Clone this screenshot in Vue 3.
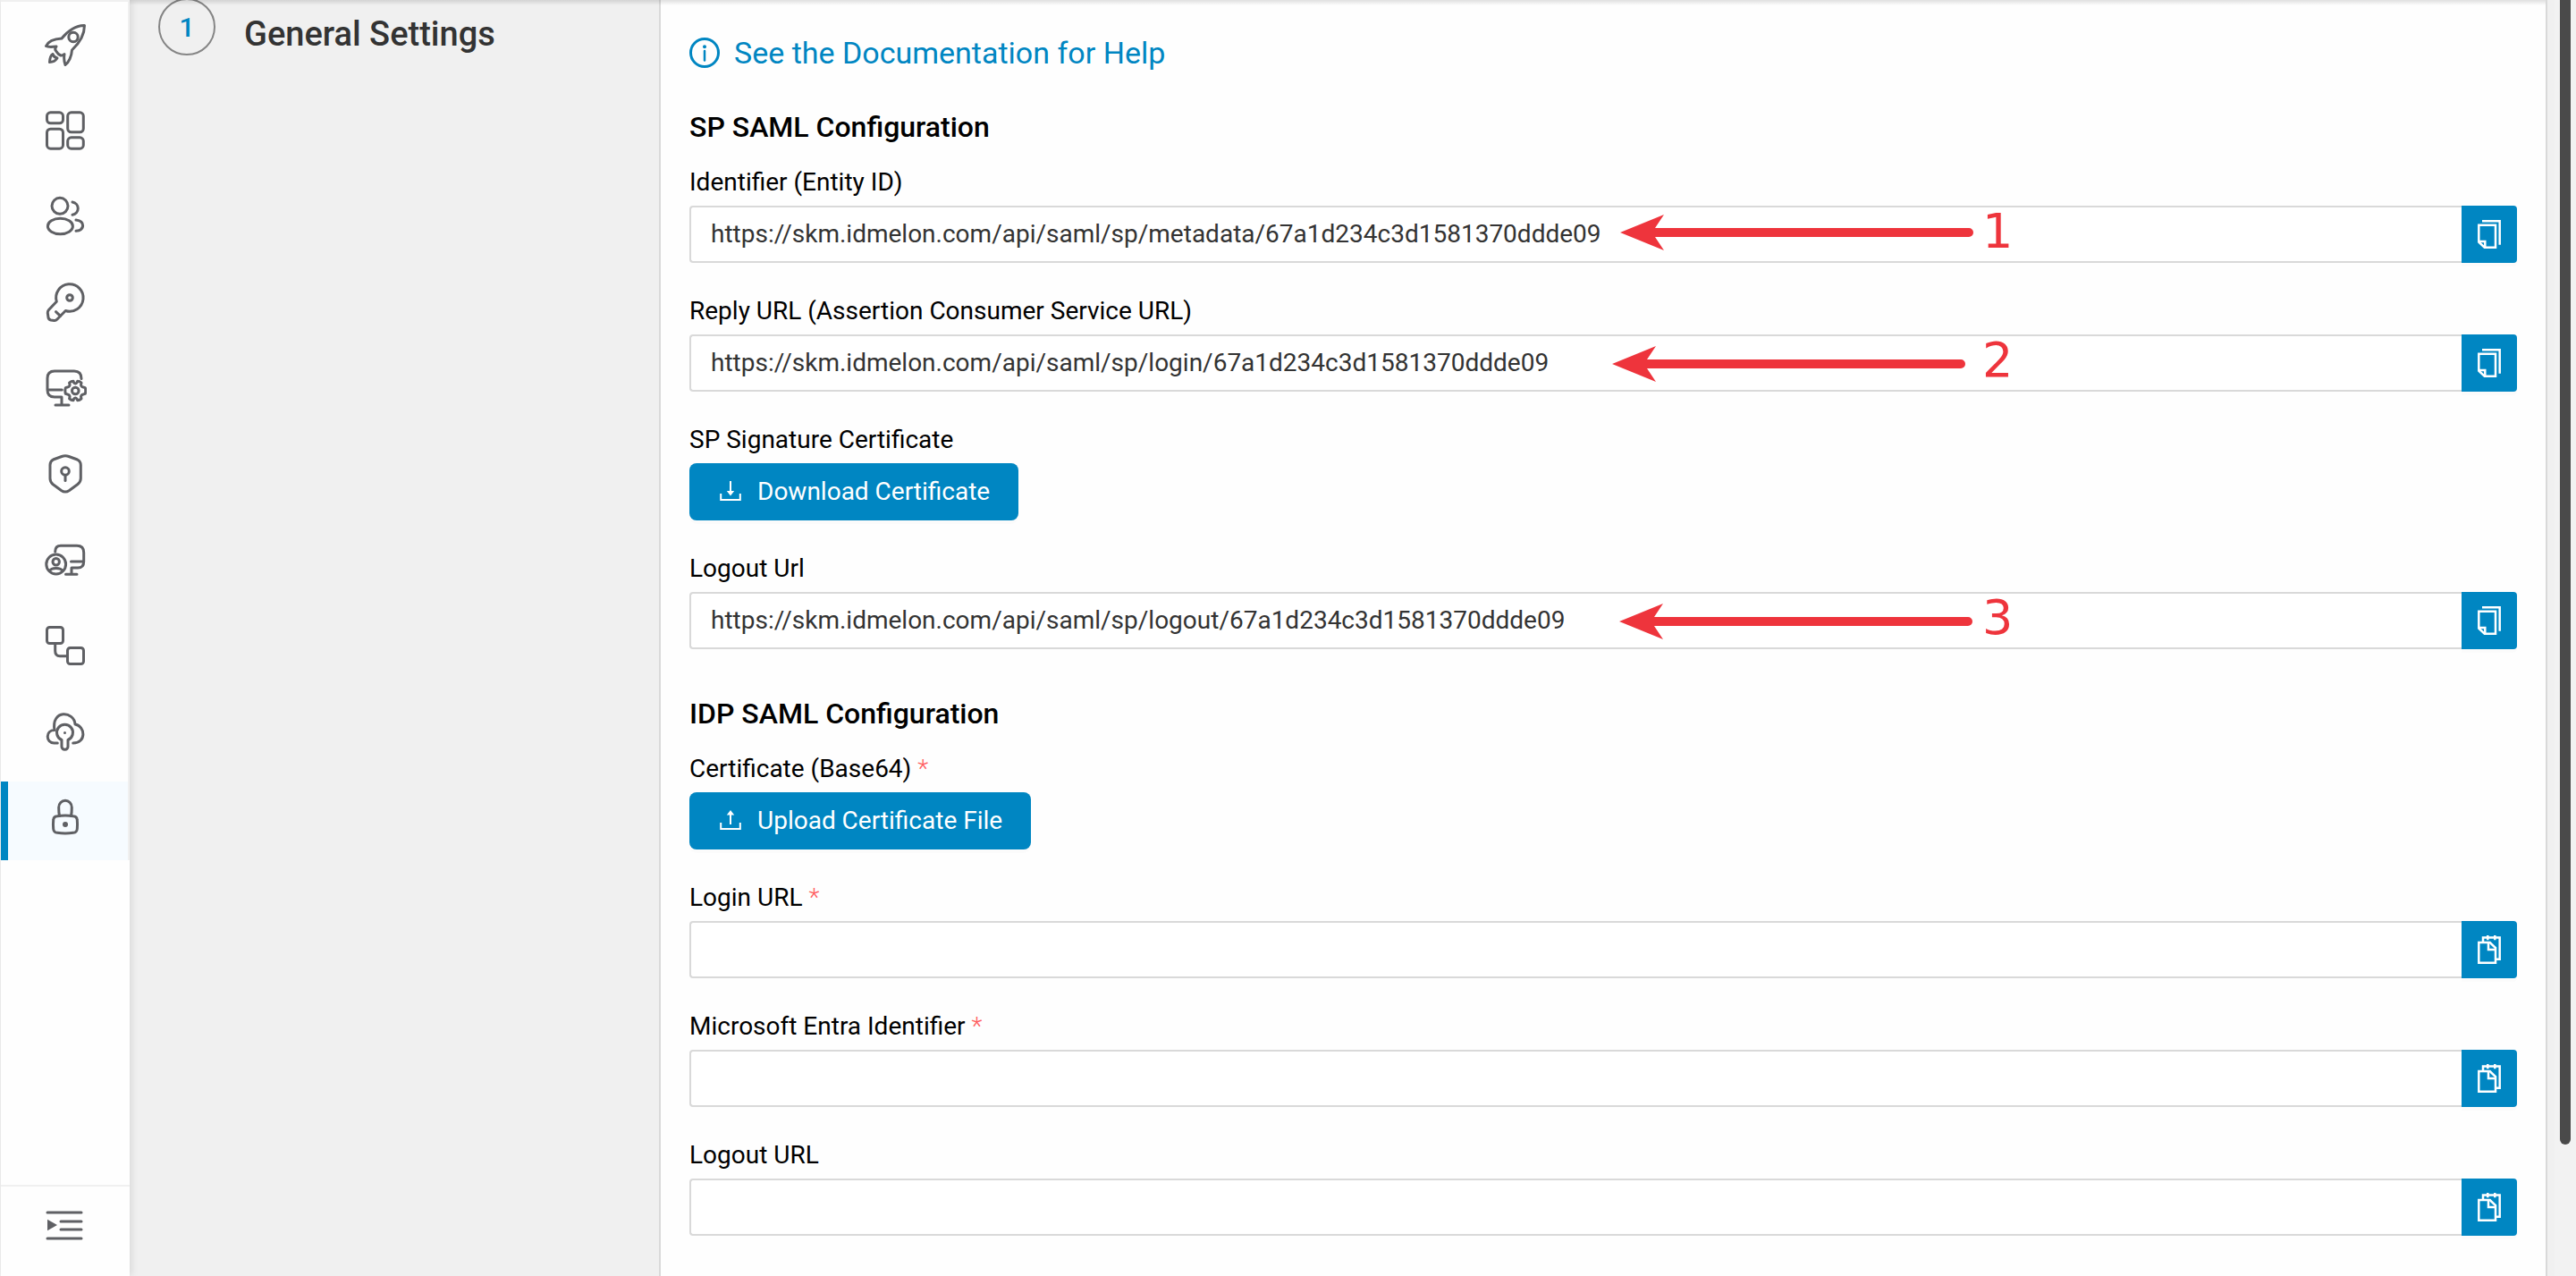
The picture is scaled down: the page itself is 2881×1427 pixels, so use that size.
<script setup>
import { ref } from 'vue'

const navItems = [
  { id: 'start', label: 'Getting started' },
  { id: 'dashboard', label: 'Dashboard' },
  { id: 'users', label: 'Users' },
  { id: 'keys', label: 'Security keys' },
  { id: 'workstations', label: 'Workstations' },
  { id: 'shield', label: 'Policies' },
  { id: 'sessions', label: 'Sessions' },
  { id: 'integrations', label: 'Integrations' },
  { id: 'cloud', label: 'Cloud access' },
  { id: 'sso', label: 'Single sign-on' },
]
const activeItem = ref('sso')

const host = 'https://skm.idmelon.com/api/saml/sp'
const tenant = '67a1d234c3d1581370ddde09'

const sections = ref([
  {
    title: 'SP SAML Configuration',
    fields: [
      { id: 'entity-id', label: 'Identifier (Entity ID)', value: `${host}/metadata/${tenant}`, icon: 'copy', mark: '1', arrow: { x: 1041, y: 10 } },
      { id: 'reply-url', label: 'Reply URL (Assertion Consumer Service URL)', value: `${host}/login/${tenant}`, icon: 'copy', mark: '2', arrow: { x: 1032, y: 13 } },
      { id: 'sp-cert', label: 'SP Signature Certificate', button: 'Download Certificate', icon: 'download' },
      { id: 'sp-logout', label: 'Logout Url', value: `${host}/logout/${tenant}`, icon: 'copy', mark: '3', arrow: { x: 1040, y: 13 } },
    ],
  },
  {
    title: 'IDP SAML Configuration',
    fields: [
      { id: 'idp-cert', label: 'Certificate (Base64)', required: true, button: 'Upload Certificate File', icon: 'upload' },
      { id: 'login-url', label: 'Login URL', required: true, value: '', icon: 'paste' },
      { id: 'entra-id', label: 'Microsoft Entra Identifier', required: true, value: '', icon: 'paste' },
      { id: 'idp-logout', label: 'Logout URL', value: '', icon: 'paste' },
    ],
  },
])
</script>

<template>
  <div class="page">
    <nav class="sidebar">
      <div class="nav-list">
        <button
          v-for="item in navItems"
          :key="item.id"
          type="button"
          class="nav-item"
          :class="{ active: item.id === activeItem }"
          :aria-label="item.label"
          @click="activeItem = item.id"
        >
          <svg class="nav-icon" viewBox="0 0 48 48">
            <template v-if="item.id === 'start'">
              <path d="M45.5 2.5C37 2 27 8 20 17C12 17.500 5 20 2.500 25.500Q5 27 14 26Q11.500 29 14 31.500Q16 35 19 36Q21 36.500 23 34.500Q22 41 24 46.500C28 44 31 37 31.500 30C40 22 45.500 12 45.500 2.500Z" />
              <circle cx="33" cy="15.500" r="5.200" />
              <path d="M10 34.500Q7 36 6.500 43.500Q12 43.500 15 39Q11 38 10 34.500Z" />
            </template>
            <template v-else-if="item.id === 'dashboard'">
              <rect x="3.500" y="3.800" width="18" height="12" rx="4" />
              <rect x="26.700" y="3.800" width="17.600" height="22" rx="4" />
              <rect x="3.500" y="22.200" width="18" height="22" rx="4" />
              <rect x="26.700" y="31.800" width="17.600" height="12.400" rx="4" />
            </template>
            <template v-else-if="item.id === 'users'">
              <ellipse cx="18" cy="12.300" rx="9" ry="9" />
              <ellipse cx="18.400" cy="35" rx="14" ry="8.700" />
              <path d="M32 8A7.500 7.200 0 0 1 32 22.200" />
              <path d="M36 28Q43.600 29 43.600 34.300T36 40.300" />
            </template>
            <template v-else-if="item.id === 'keys'">
              <path d="M14.300 23.300A15.200 15.200 0 1 1 24.300 33.500L15 43Q13.500 44.600 11.500 44.400L8 44Q5.300 43.400 5 41L4.300 36Q4.200 34 5.300 32.800Z" />
              <circle cx="29" cy="19" r="3.300" />
              <path d="M13.500 34.700L18.500 39.300" />
            </template>
            <template v-else-if="item.id === 'workstations'">
              <path d="M42 13.500Q42 5 34 5H12Q4 5 4 13V26Q4 34 12 34H20V43M13 43H28M4 26H20.300" />
              <path d="M33 16.300L33.500 17.800Q35.300 20 37.100 17.800L37.700 16.300Q40 16.300 42 18.200L41.500 20.500Q42 22.800 44 23L46.300 23.600Q47.200 27 46.300 30.400L44 31Q42 31.300 41.500 33.500L42 35.800Q40 37.700 37.700 37.700L37.100 36.200Q35.300 34 33.500 36.200L33 37.700Q30.600 37.700 28.600 35.800L29.100 33.500Q28.600 31.300 26.600 31L24.300 30.400Q23.400 27 24.300 23.600L26.600 23Q28.600 22.800 29.100 20.500L28.600 18.200Q30.600 16.300 33 16.300Z" />
              <circle cx="35.300" cy="27" r="3.800" />
            </template>
            <template v-else-if="item.id === 'shield'">
              <path d="M20 4.500Q24 3 28 4.500L37.500 8Q41.300 10 41.300 14V29Q41.300 33 38 35.500L28.500 42.500Q24 45.600 19.500 42.500L10 35.500Q7 33 7 29V14Q7 10 10.500 8Z" />
              <circle cx="24" cy="21" r="4.300" />
              <path d="M24 25.500V31.500" />
            </template>
            <template v-else-if="item.id === 'sessions'">
              <path d="M12.700 15Q12.700 8.300 19 8.300H37Q44.700 8.300 44.700 16V26Q44.700 33 38 33H31V40.300M24.500 40.300H37M30.500 26H44.700" />
              <circle cx="13.700" cy="29" r="10.900" />
              <circle cx="13.700" cy="26.300" r="3.700" />
              <path d="M6.500 36.500Q8 33.500 13.700 33.500T21 36.500" />
            </template>
            <template v-else-if="item.id === 'integrations'">
              <rect x="3.500" y="3.500" width="18" height="18" rx="3" />
              <rect x="26.500" y="26.500" width="18" height="18" rx="3" />
              <path d="M12.700 22V30Q12.700 35.700 18 35.700H26.500" />
            </template>
            <template v-else-if="item.id === 'cloud'">
              <path d="M15.300 37H11.500C2 37 1.500 22.500 12 22.500C8 -1 34 1 35 16C46.500 18 48 37 32.700 37" />
              <path d="M20 33.500A9 9 0 1 1 27 33.500V41A3.500 3.300 0 0 1 20 41Z" />
              <circle class="solid" cx="23.500" cy="25.500" r="1.500" />
            </template>
            <template v-else>
              <path d="M17.500 22.500Q16.700 19 16.700 13A7.300 7.700 0 0 1 31.300 13Q31.300 19 30.500 22.500" />
              <path d="M15 22.700Q24 21.500 33 22.700Q37 23 37.300 27Q37.800 32 37.300 37Q37 41 33 41.300Q24 42.500 15 41.300Q11 41 10.700 37Q10.200 32 10.700 27Q11 23 15 22.700Z" />
              <circle class="solid" cx="24" cy="32" r="3" />
            </template>
          </svg>
        </button>
      </div>
      <div class="nav-footer">
        <button type="button" class="nav-item" aria-label="Expand menu">
          <svg class="nav-icon" viewBox="0 0 48 48">
            <path d="M4 9H42M19 19H42M19 28H42M4 38H42" />
            <path class="solid" d="M4 16.700L15 23L4 29.300Z" />
          </svg>
        </button>
      </div>
    </nav>

    <aside class="steps">
      <div class="step">
        <span class="step-number">1</span>
        <h1 class="step-title">General Settings</h1>
      </div>
    </aside>

    <main class="panel">
      <a href="#" class="doc-link">
        <svg class="info-icon" viewBox="0 0 34 34">
          <circle cx="17" cy="17" r="15.500" fill="none" stroke="currentColor" stroke-width="3" />
          <circle cx="17" cy="10.300" r="2" fill="currentColor" />
          <path d="M17 15V25.500" stroke="currentColor" stroke-width="2.500" stroke-linecap="round" />
        </svg>
        <span>See the Documentation for Help</span>
      </a>

      <section v-for="section in sections" :key="section.title" class="section">
        <h2 class="section-title">{{ section.title }}</h2>
        <div v-for="field in section.fields" :key="field.id" class="field">
          <label class="label" :for="field.id">{{ field.label }} <span v-if="field.required" class="required">*</span></label>

          <button v-if="field.button" :id="field.id" type="button" class="action">
            <svg class="action-icon" viewBox="0 0 24 24">
              <path d="M1.200 14V21H22.800V14" fill="none" stroke="currentColor" stroke-width="2" />
              <template v-if="field.icon === 'download'">
                <path d="M12 0V12" stroke="currentColor" stroke-width="2" />
                <path d="M7.800 11H16.200L12 16.500Z" fill="currentColor" />
              </template>
              <template v-else>
                <path d="M12 4V16" stroke="currentColor" stroke-width="2" />
                <path d="M7.800 5.500H16.200L12 0Z" fill="currentColor" />
              </template>
            </svg>
            <span>{{ field.button }}</span>
          </button>

          <div v-else class="input-row">
            <input :id="field.id" v-model="field.value" type="text" class="input" :readonly="field.icon === 'copy'" />
            <button type="button" class="addon" :aria-label="field.icon">
              <svg class="addon-icon" viewBox="0 0 26 32">
                <template v-if="field.icon === 'copy'">
                  <path d="M5 1.300H24.700V27.700" />
                  <path d="M1.300 5.700H20V30.700H7.700L1.300 24.700Z" />
                  <path d="M1.300 24H8.300V30.700" />
                </template>
                <template v-else>
                  <path d="M6 8V2.500H24.700V26.700H20.500M11.300 0V5.300M19.300 0V5.300" />
                  <path d="M1.300 8H13.700L20 14V30.700H1.300Z" />
                  <path d="M12 8V16H20" />
                </template>
              </svg>
            </button>
            <template v-if="field.mark">
              <svg class="arrow" viewBox="0 0 395 40" :style="{ left: field.arrow.x + 'px', top: field.arrow.y + 'px' }">
                <path d="M0 20L49 0L39 15H390A5 5 0 0 1 390 25H39L49 40Z" />
              </svg>
              <span class="mark">{{ field.mark }}</span>
            </template>
          </div>
        </div>
      </section>
    </main>

    <div class="scrollbar"><div class="thumb"></div></div>
  </div>
</template>

<style>
body {
  background: #f0f0f0;
}
</style>

<style scoped>
.page {
  position: relative;
  display: flex;
  box-sizing: border-box;
  height: 100vh;
  overflow: hidden;
  padding-left: 1px;
  background: #f0f0f0;
  font-family: Roboto, sans-serif;
  font-size: 28px;
  line-height: 44px;
  color: #000;
}
.page::after {
  content: '';
  position: absolute;
  top: 0;
  left: 145px;
  right: 34px;
  height: 6px;
  background: linear-gradient(rgba(0, 0, 0, 0.12), rgba(0, 0, 0, 0));
}
button {
  margin: 0;
  padding: 0;
  border: 0;
  font: inherit;
  cursor: pointer;
}

/* Sidebar */
.sidebar {
  display: flex;
  flex: none;
  flex-direction: column;
  justify-content: space-between;
  width: 144px;
  background: #fefefe;
  box-shadow: 2px 0 8px rgba(0, 0, 0, 0.1);
}
.nav-list {
  display: flex;
  flex-direction: column;
  gap: 8px;
  padding-top: 8px;
  border-top: 2px solid #f0f0f0;
  border-right: 2px solid #f0f0f0;
}
.nav-item {
  display: flex;
  align-items: center;
  justify-content: center;
  box-sizing: border-box;
  width: 100%;
  height: 88px;
  padding: 0 0 8px 2px;
  background: transparent;
}
.nav-item.active {
  background: #f6fbff;
  box-shadow: inset 8px 0 #0086c2;
}
.nav-icon {
  width: 48px;
  height: 48px;
  fill: none;
  stroke: #5f6064;
  stroke-width: 3;
  stroke-linecap: round;
  stroke-linejoin: round;
}
.nav-icon .solid {
  fill: #5f6064;
  stroke: none;
}
.nav-footer {
  padding-bottom: 12px;
  border-top: 2px solid #f0f0f0;
}
.nav-footer .nav-item {
  padding: 0;
}

/* Steps */
.steps {
  flex: none;
  box-sizing: border-box;
  width: 592px;
  padding: 0 32px;
}
.step {
  display: flex;
  align-items: flex-start;
  gap: 32px;
  margin-top: -2px;
}
.step-number {
  box-sizing: border-box;
  width: 64px;
  height: 64px;
  border: 2px solid #858585;
  border-radius: 50%;
  font-size: 30px;
  font-weight: 500;
  line-height: 62px;
  text-align: center;
  color: #0086c2;
}
.step-title {
  margin: 0;
  font-size: 38px;
  font-weight: 500;
  line-height: 80px;
  color: #333;
}

/* Form panel */
.panel {
  flex: 1;
  min-width: 0;
  padding: 37px 32px 0;
  border: solid #d9d9d9;
  border-width: 0 2px;
  background: #fefefe;
}
.doc-link {
  display: flex;
  align-items: center;
  gap: 16px;
  width: fit-content;
  margin-bottom: 39px;
  font-size: 34px;
  color: #0086c2;
  text-decoration: none;
}
.info-icon {
  width: 34px;
  height: 34px;
}
.section + .section {
  margin-top: 50px;
}
.section-title {
  margin: 0 0 18px;
  font-size: 32px;
  font-weight: 500;
}
.field + .field {
  margin-top: 32px;
}
.label {
  display: block;
  margin-bottom: 4px;
}
.required {
  font-weight: 300;
  color: #ff5c5f;
}
.input-row {
  position: relative;
  display: flex;
  height: 64px;
}
.input {
  flex: 1;
  box-sizing: border-box;
  min-width: 0;
  margin: 0;
  padding: 0 22px;
  border: 2px solid #d9d9d9;
  border-right: 0;
  border-radius: 4px 0 0 4px;
  outline: none;
  background: #fff;
  font: inherit;
  color: #333;
}
.addon {
  display: flex;
  align-items: center;
  justify-content: center;
  width: 62px;
  border-radius: 0 4px 4px 0;
  background: #0086c2;
  box-shadow: 0 4px 0 rgba(0, 0, 0, 0.01);
}
.addon-icon {
  width: 26px;
  height: 32px;
  fill: none;
  stroke: #fff;
  stroke-width: 2.5;
}
.action {
  display: flex;
  align-items: center;
  gap: 18px;
  height: 64px;
  padding: 0 32px 0 34px;
  border-radius: 8px;
  background: #0086c2;
  box-shadow: 0 4px 0 rgba(0, 0, 0, 0.01);
  color: #fff;
}
.action-icon {
  width: 24px;
  height: 24px;
}

/* Callouts drawn over the inputs */
.arrow {
  position: absolute;
  width: 395px;
  height: 40px;
  fill: #ee343c;
}
.mark {
  position: absolute;
  top: 1px;
  left: 1446px;
  font-family: 'DejaVu Sans', sans-serif;
  font-size: 54px;
  line-height: 56px;
  color: #ee343c;
}

/* Page scrollbar */
.scrollbar {
  display: flex;
  flex: none;
  box-sizing: border-box;
  width: 24px;
  margin-left: 8px;
  padding: 0 6px 147px;
  background: #f2f2f2;
}
.thumb {
  flex: 1;
  border-radius: 0 0 6px 6px;
  background: #4a4a4a;
}
</style>
